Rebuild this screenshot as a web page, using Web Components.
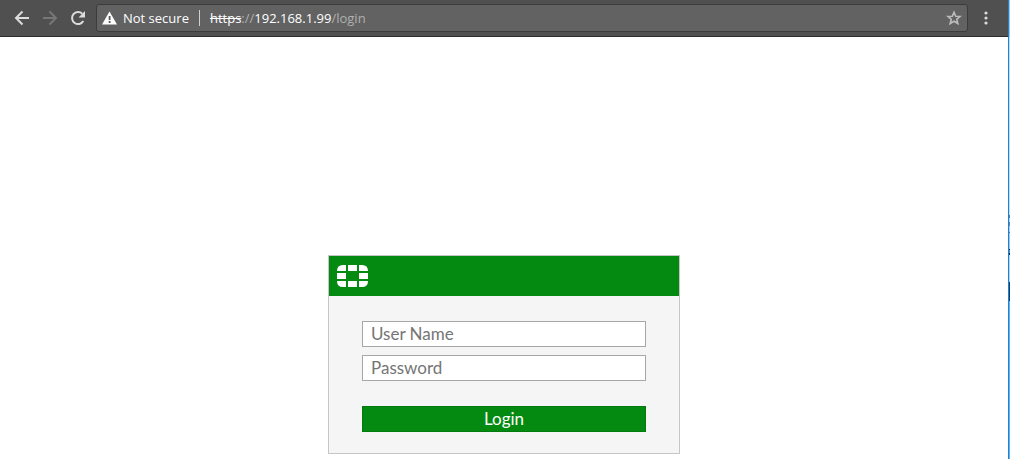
<!DOCTYPE html>
<html lang="en">
<head>
<meta charset="utf-8">
<title>Login</title>
<style>
  html, body { height: 100%; }
  body { margin: 0; background: #fff; overflow: hidden; }
</style>
</head>
<body>
<browser-window>
  <browser-toolbar slot="toolbar">
    <address-bar>
      <span slot="status">Not secure</span>
      <span slot="scheme">https</span>
      <span slot="separator">://</span>
      <span slot="host">192.168.1.99</span>
      <span slot="path">/login</span>
    </address-bar>
  </browser-toolbar>
  <login-card>
    <login-field name="username" label="User Name"></login-field>
    <login-field name="password" label="Password" type="password"></login-field>
    <login-button slot="action">Login</login-button>
  </login-card>
</browser-window>

<script>
class BaseElement extends HTMLElement {
  constructor() {
    super();
    this.attachShadow({ mode: 'open' }).innerHTML = this.constructor.markup;
  }
}

customElements.define('browser-window', class extends BaseElement {
  static markup = `
    <style>
      :host { display: flex; height: 100%; }
      .window { flex: 1; min-width: 0; display: flex; flex-direction: column; }
      main { flex: 1; display: flex; flex-direction: column; align-items: center; padding-top: 218px; background: #fff; }
      .edge {
        flex: none; width: 1px; border-left: 1px solid #1883d7;
        background: linear-gradient(#a9c3da 0 37px, #c3dcf2 37px 215px, #4b7aa5 215px 218px, #b5d3ec 218px 222px,
          #5f87ab 222px 226px, #a9c9e4 226px 232px, #4f7ba3 232px 233px, #a3c5e2 233px 249px, #0c2942 249px 250px,
          #5f8db5 250px 253px, #0c2942 253px 255px, #b9d5ed 255px 282px, #153e60 282px 301px, #67b2ed 301px);
      }
    </style>
    <div class="window"><slot name="toolbar"></slot><main><slot></slot></main></div>
    <div class="edge"></div>`;
});

customElements.define('browser-toolbar', class extends BaseElement {
  static markup = `
    <style>
      :host { display: flex; align-items: center; box-sizing: border-box; height: 37px; padding: 0 8px; background: #505050; border-bottom: 1px solid #2c2c2c; }
      button { flex: none; width: 28px; height: 28px; padding: 0; border: 0; background: none; color: #dcdcdc; display: grid; place-items: center; }
      button:disabled { color: #777; }
      svg { display: block; }
      ::slotted(address-bar) { flex: 1; margin: 0 4px; }
    </style>
    <button aria-label="Back"><svg width="16" height="16" viewBox="0 0 16 16" fill="none" stroke="currentColor" stroke-width="2"><path d="M15 8H2.5M8.5 1.5 2 8l6.500 6.500"/></svg></button>
    <button aria-label="Forward" disabled><svg width="16" height="16" viewBox="0 0 16 16" fill="none" stroke="currentColor" stroke-width="2"><path d="M1 8h12.500M7.500 1.500 14 8l-6.500 6.500"/></svg></button>
    <button aria-label="Reload"><svg width="16" height="16" viewBox="0 0 16 16"><path d="M13.300 11A6 6 0 1 1 12.300 3.800" fill="none" stroke="currentColor" stroke-width="2"/><path d="M15 1v6.500H8.500z" fill="currentColor"/></svg></button>
    <slot></slot>
    <button aria-label="Menu"><svg width="4" height="16" viewBox="0 0 4 16" fill="currentColor"><circle cx="2" cy="3" r="1.600"/><circle cx="2" cy="8" r="1.600"/><circle cx="2" cy="13" r="1.600"/></svg></button>`;
});

customElements.define('address-bar', class extends BaseElement {
  static markup = `
    <style>
      :host { display: flex; align-items: center; box-sizing: border-box; min-width: 0; height: 28px; padding: 0 5px; background: #626262; border: 1px solid #3c3c3c; border-radius: 3px; color: #fff; font: 13px/20px "Open Sans", "Noto Sans", sans-serif; white-space: nowrap; }
      svg { display: block; flex: none; }
      .status { margin-left: 6px; }
      .divider { width: 1px; height: 16px; margin: 0 10px; background: #d0d0d0; }
      .url { flex: 1; display: flex; }
      .scheme { text-decoration: line-through; }
      .dim { color: #b0b0b0; }
      button { width: 16px; height: 16px; padding: 0; border: 0; background: none; color: #bcbcbc; }
    </style>
    <svg width="15" height="14" viewBox="0 0 15 14" aria-hidden="true"><path d="M7.500 0.500 15 13.500H0z" fill="#fff"/><path d="M6.700 5h1.800v4H6.700zM6.700 10h1.800v2H6.700z" fill="#555"/></svg>
    <span class="status"><slot name="status"></slot></span>
    <span class="divider"></span>
    <div class="url"><span class="scheme"><slot name="scheme"></slot></span><span class="dim"><slot name="separator"></slot></span><span><slot name="host"></slot></span><span class="dim"><slot name="path"></slot></span></div>
    <button aria-label="Bookmark this page"><svg width="16" height="16" viewBox="0 0 16 16" fill="none" stroke="currentColor" stroke-width="1.600"><path d="M8 2.200 9.700 6.200 14 6.500 10.700 9.300 11.800 13.500 8 11.200 4.200 13.500 5.300 9.300 2 6.500 6.300 6.200z"/></svg></button>`;
});

customElements.define('login-card', class extends BaseElement {
  static markup = `
    <style>
      :host { display: block; box-sizing: border-box; width: 352px; max-width: 100%; border: 1px solid #c6c6c6; background: #f5f5f5; }
      header { display: flex; align-items: center; height: 40px; padding: 0 8px; background: #048a10; }
      form { display: flex; flex-direction: column; padding: 25px 33px 21px; }
      .fields { display: flex; flex-direction: column; gap: 8px; margin-bottom: 25px; }
    </style>
    <header>
      <svg width="31" height="22" viewBox="0 0 31 22" fill="#fff" role="img" aria-label="Fortinet">
        <path d="M6 0H9V6H0Q0 0 6 0zM11 0h9v6h-9zM22 0h3q6 0 6 6h-9zM0 8h9v6H0zM22 8h9v6h-9zM0 16h9v6H6q-6 0-6-6zM11 16h9v6h-9zM22 16h9q0 6-6 6h-3z"/>
      </svg>
    </header>
    <form><div class="fields"><slot></slot></div><slot name="action"></slot></form>`;
});

customElements.define('login-field', class extends BaseElement {
  static markup = `
    <style>
      :host { display: block; }
      input { display: block; box-sizing: border-box; width: 100%; height: 26px; margin: 0; padding: 0 8px 2px; border: 1px solid #a6a6a6; border-radius: 0; background: #fff; color: #333; font: 17px/22px Lato, sans-serif; }
      input::placeholder { color: #757575; opacity: 1; }
    </style>
    <input>`;
  connectedCallback() {
    const input = this.shadowRoot.querySelector('input');
    const label = this.getAttribute('label');
    input.type = this.getAttribute('type') || 'text';
    input.name = this.getAttribute('name');
    input.placeholder = label;
    input.setAttribute('aria-label', label);
  }
});

customElements.define('login-button', class extends BaseElement {
  static markup = `
    <style>
      :host { display: block; }
      button { display: block; box-sizing: border-box; width: 100%; height: 26px; padding: 0; border: 1px solid #037a0e; border-radius: 0; background: #048a10; color: #fff; font: 17px/24px Lato, sans-serif; }
    </style>
    <button type="submit"><slot></slot></button>`;
});
</script>
</body>
</html>
